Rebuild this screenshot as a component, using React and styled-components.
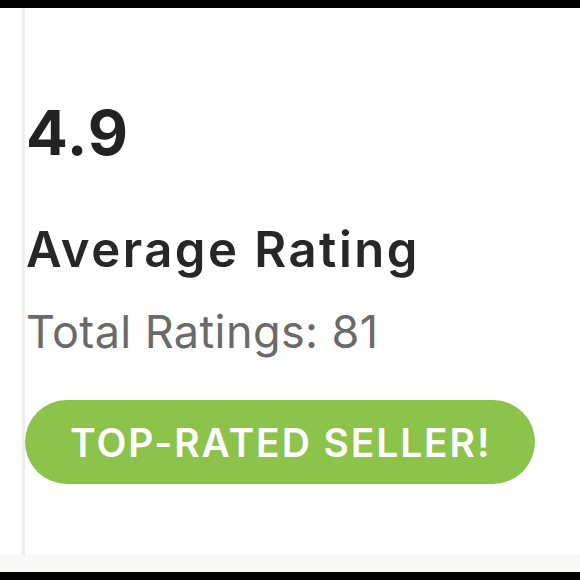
import React from "react";
import styled, { createGlobalStyle } from "styled-components";

const GlobalStyle = createGlobalStyle`
  html, body {
    margin: 0;
    padding: 0;
    background: #000000;
  }
  body {
    font-family: Inter, "Noto Sans", "Liberation Sans", sans-serif;
  }
`;

const Frame = styled.div`
  width: 580px;
  height: 580px;
  padding: 8px 0;
  box-sizing: border-box;
  background: #000000;
`;

const Panel = styled.div`
  height: 100%;
  display: flex;
  flex-direction: column;
  background: #ffffff;
`;

const Main = styled.div`
  flex: 1;
  margin-left: 22px;
  border-left: 3px solid #efeeeb;
  padding: 94px 0 0 0;
  display: flex;
  flex-direction: column;
  align-items: flex-start;
`;

const Footer = styled.div`
  height: 17px;
  background: #f8f8f7;
`;

const Score = styled.div`
  font-size: 62px;
  line-height: 1;
  font-weight: 700;
  color: #222222;
  margin-left: 1px;
  letter-spacing: 1px;
`;

const Title = styled.div`
  margin-top: 61px;
  font-size: 49px;
  line-height: 1;
  font-weight: 600;
  color: #272727;
  margin-left: 1px;
  letter-spacing: 2.5px;
`;

const Count = styled.div`
  margin-top: 35px;
  font-size: 45px;
  line-height: 1;
  font-weight: 400;
  color: #6a6a6a;
  margin-left: 1px;
  letter-spacing: 0.4px;
`;

const Badge = styled.div`
  margin-top: 46px;
  height: 84px;
  padding: 0 44px 0 45px;
  display: inline-flex;
  align-items: center;
  justify-content: center;
  border-radius: 42px;
  background: #8bc34b;
  color: #ffffff;
  font-size: 39px;
  font-weight: 600;
  letter-spacing: 1.9px;
  white-space: nowrap;
`;

export default function App() {
  return (
    <Frame>
      <GlobalStyle />
      <Panel>
        <Main>
          <Score>4.9</Score>
          <Title>Average Rating</Title>
          <Count>Total Ratings: 81</Count>
          <Badge>TOP-RATED SELLER!</Badge>
        </Main>
        <Footer />
      </Panel>
    </Frame>
  );
}
